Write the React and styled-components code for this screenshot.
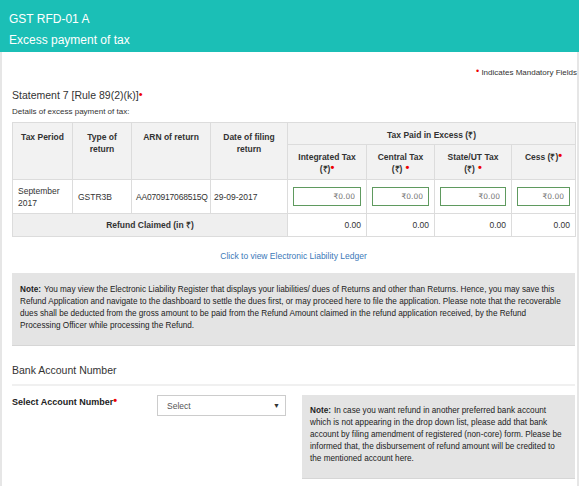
import React from "react"
import styled, { createGlobalStyle } from "styled-components"

const GlobalStyle = createGlobalStyle`
  html, body {
    margin: 0;
    padding: 0;
    overflow: hidden;
    background: #fff;
    font-family: "Liberation Sans", Arial, sans-serif;
    color: #333;
  }
`

const Header = styled.div`
  background: #1bbfb6;
  height: 52px;
  padding: 9px 9px 0;
  box-sizing: border-box;
  color: #fff;
  font-size: 12px;
`
const HeaderLine = styled.div`
  height: 21px;
  line-height: 21px;
`

const Body = styled.div`
  border-left: 2px solid #e6e6e6;
  border-right: 2px solid #e6e6e6;
  padding: 0 2px 0 10px;
  min-height: 440px;
`

const Mandatory = styled.div`
  text-align: right;
  font-size: 8px;
  padding-top: 16px;
  color: #333;
  margin-right: -2px;
`
const Star = styled.span`
  color: #e00;
  font-size: ${p => p.size || 11}px;
  line-height: 0;
  position: relative;
  top: -1px;
  margin-left: ${p => p.gap || 0}px;
`

const Title = styled.div`
  font-size: 10.5px;
  margin-top: 11px;
  line-height: 14px;
`
const SubTitle = styled.div`
  font-size: 8px;
  margin-top: 5px;
  margin-bottom: 6px;
`

const Table = styled.table`
  width: 563px;
  border-collapse: collapse;
  table-layout: fixed;
  font-size: 8.5px;
`
const Th = styled.th`
  background: #f2f2f2;
  border: 1px solid #dcdcdc;
  font-weight: bold;
  color: #333;
  vertical-align: top;
  padding: ${p => (p.short ? "6px 3px 0" : "8px 3px 0")};
  height: ${p => p.h || 22}px;
  box-sizing: border-box;
  line-height: 12px;
  text-align: center;
`
const Td = styled.td`
  border: 1px solid #dcdcdc;
  background: ${p => (p.grey ? "#efefef" : "#fff")};
  text-align: ${p => p.align || "left"};
  font-weight: ${p => (p.bold ? "bold" : "normal")};
  padding: 0 ${p => p.pad ?? 5}px;
  height: ${p => p.h || 34}px;
  line-height: 12px;
  box-sizing: border-box;
  letter-spacing: ${p => (p.tight ? "-0.2px" : "normal")};
  white-space: ${p => (p.tight ? "nowrap" : "normal")};
`
const AmountInput = styled.input`
  width: 100%;
  height: 19px;
  box-sizing: border-box;
  border: 1px solid #5f9a5f;
  text-align: right;
  font-family: "DejaVu Sans", sans-serif;
  font-size: 7.5px;
  padding: 0 5px;
  display: block;
  &::placeholder {
    color: #777;
  }
`

const LedgerLink = styled.a`
  display: block;
  text-align: center;
  color: #3a78b8;
  font-size: 8.5px;
  margin: 14px 0 12px;
  text-decoration: none;
`

const NoteBox = styled.div`
  background: #e4e4e4;
  border-bottom: 1px solid #d6d6d6;
  font-size: 8.2px;
  line-height: 12px;
  padding: ${p => p.pad || "11px 8px 13px"};
  color: #222;
`
const NoteLabel = styled.b`
  margin-right: 3px;
`

const SectionTitle = styled.div`
  font-size: 10.5px;
  padding: 18px 0 8px;
  border-bottom: 2px solid #f0f0f0;
`

const AccountRow = styled.div`
  display: grid;
  grid-template-columns: 129px 129px 1fr;
  column-gap: 16px;
  align-items: start;
  margin-top: 9px;
`
const Label = styled.div`
  font-size: 9px;
  font-weight: bold;
  padding-top: 2px;
  color: #222;
  white-space: nowrap;
`
const SelectBox = styled.div`
  height: 21px;
  border: 1px solid #ccc;
  box-sizing: border-box;
  display: flex;
  align-items: center;
  justify-content: space-between;
  padding: 0 5px 0 9px;
  font-size: 8.5px;
  color: #555;
`
const Caret = styled.span`
  font-size: 7px;
  color: #333;
`

const taxes = [
  { label: "Integrated Tax", sub: "(₹)", gap: 0 },
  { label: "Central Tax", sub: "(₹)", gap: 3 },
  { label: "State/UT Tax", sub: "(₹)", gap: 3 },
]

export default function App() {
  return (
    <>
      <GlobalStyle />
      <Header>
        <HeaderLine>GST RFD-01 A</HeaderLine>
        <HeaderLine>Excess payment of tax</HeaderLine>
      </Header>
      <Body>
        <Mandatory>
          <Star size={9}>•</Star> Indicates Mandatory Fields
        </Mandatory>
        <Title>
          Statement 7 [Rule 89(2)(k)]<Star>•</Star>
        </Title>
        <SubTitle>Details of excess payment of tax:</SubTitle>
        <Table>
          <colgroup>
            <col style={{ width: 60 }} />
            <col style={{ width: 59 }} />
            <col style={{ width: 79 }} />
            <col style={{ width: 77 }} />
            <col style={{ width: 79 }} />
            <col style={{ width: 68 }} />
            <col style={{ width: 77 }} />
            <col style={{ width: 64 }} />
          </colgroup>
          <thead>
            <tr>
              <Th rowSpan={2}>Tax Period</Th>
              <Th rowSpan={2}>Type of<br />return</Th>
              <Th rowSpan={2}>ARN of return</Th>
              <Th rowSpan={2}>Date of filing<br />return</Th>
              <Th colSpan={4} short>Tax Paid in Excess (₹)</Th>
            </tr>
            <tr>
              {taxes.map(t => (
                <Th key={t.label} h={35} short>
                  {t.label}
                  <br />
                  {t.sub}
                  <Star gap={t.gap}>•</Star>
                </Th>
              ))}
              <Th h={35} short>
                Cess (₹)<Star>•</Star>
              </Th>
            </tr>
          </thead>
          <tbody>
            <tr>
              <Td>September<br />2017</Td>
              <Td>GSTR3B</Td>
              <Td pad={4} tight>AA070917068515Q</Td>
              <Td pad={3}>29-09-2017</Td>
              {[0, 1, 2, 3].map(i => (
                <Td key={i}>
                  <AmountInput placeholder="₹0.00" />
                </Td>
              ))}
            </tr>
            <tr>
              <Td colSpan={4} grey bold align="center" h={23}>
                Refund Claimed (in ₹)
              </Td>
              {[0, 1, 2, 3].map(i => (
                <Td key={i} align="right" h={23}>
                  0.00
                </Td>
              ))}
            </tr>
          </tbody>
        </Table>
        <LedgerLink href="#">Click to view Electronic Liability Ledger</LedgerLink>
        <NoteBox>
          <NoteLabel>Note:</NoteLabel>You may view the Electronic Liability Register that
          displays your liabilities/ dues of Returns and other than Returns. Hence, you may
          save this Refund Application and navigate to the dashboard to settle the dues
          first, or may proceed here to file the application. Please note that the
          recoverable dues shall be deducted from the gross amount to be paid from the
          Refund Amount claimed in the refund application received, by the Refund
          Processing Officer while processing the Refund.
        </NoteBox>
        <SectionTitle>Bank Account Number</SectionTitle>
        <AccountRow>
          <Label>
            Select Account Number<Star>•</Star>
          </Label>
          <SelectBox>
            Select <Caret>▼</Caret>
          </SelectBox>
          <NoteBox pad="10px 8px 13px">
            <NoteLabel>Note:</NoteLabel>In case you want refund in another preferred bank
            account which is not appearing in the drop down list, please add that bank
            account by filing amendment of registered (non-core) form. Please be informed
            that, the disbursement of refund amount will be credited to the mentioned
            account here.
          </NoteBox>
        </AccountRow>
      </Body>
    </>
  )
}
